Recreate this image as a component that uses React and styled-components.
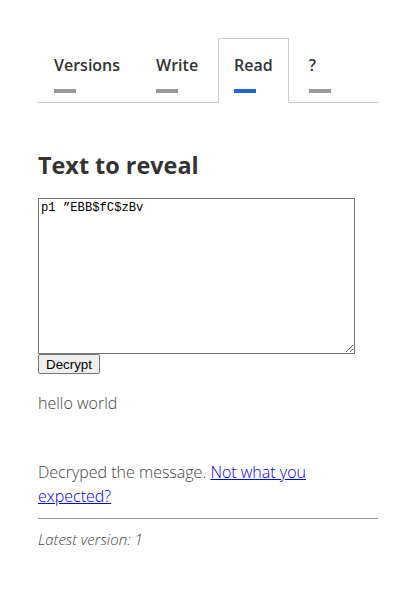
import React from 'react'
import styled, { createGlobalStyle } from 'styled-components'

const GlobalStyle = createGlobalStyle`
  body {
    margin: 0;
    background: #fff;
    font-family: "Open Sans", "Liberation Sans", sans-serif;
  }
`

const Page = styled.div`
  padding: 38px 38px 40px;
  width: 340px;
`

const TabBar = styled.nav`
  display: flex;
  align-items: flex-start;
  gap: 4px;
  border-bottom: 1px solid #ccc;
`

const Tab = styled.div`
  padding: 14px 15px 10px;
  margin-bottom: -1px;
  border: 1px solid ${p => (p.$active ? '#ccc' : 'transparent')};
  border-bottom: none;
  background: ${p => (p.$active ? '#fff' : 'transparent')};
  cursor: pointer;
`

const TabLabel = styled.div`
  font-size: 16px;
  font-weight: 600;
  line-height: 24px;
  color: #333;
`

const TabBarMark = styled.div`
  margin-top: 12px;
  width: 22px;
  height: 4px;
  background: ${p => (p.$active ? '#2266cc' : '#999')};
`

const Heading = styled.h2`
  margin: 46px 0 17px;
  font-size: 23.4px;
  font-weight: 700;
  line-height: 32px;
  color: #333;
`

const Cipher = styled.textarea`
  display: block;
  box-sizing: border-box;
  width: 317px;
  height: 156px;
  margin: 0;
  padding: 2px;
  border: 1px solid #767676;
  border-radius: 0;
  font-family: "Liberation Mono", "DejaVu Sans Mono", monospace;
  font-size: 12.2px;
  line-height: 15px;
  color: #000;
  outline: none;
`

const Button = styled.button`
  display: block;
  margin: 0;
  padding: 1px 7px;
  height: 20px;
  font-family: "Liberation Sans", Arial, sans-serif;
  font-size: 13.33px;
  color: #000;
  background: #efefef;
  border: 1px solid #767676;
  border-radius: 2px;
`

const Plain = styled.p`
  margin: ${p => p.$margin || '0'};
  font-size: 16px;
  font-weight: 300;
  line-height: 24px;
  color: #444;
`

const Link = styled.a`
  color: #0000ee;
  text-decoration: underline;
`

const Rule = styled.hr`
  margin: 10px 0 0;
  border: none;
  border-top: 1px solid #999;
`

const Footer = styled.p`
  margin: 10px 0 0;
  font-size: 15px;
  font-style: italic;
  font-weight: 300;
  line-height: 20px;
  color: #444;
`

const tabs = ['Versions', 'Write', 'Read', '?']

export default function App () {
  return (
    <Page>
      <GlobalStyle />
      <TabBar>
        {tabs.map(t => (
          <Tab key={t} $active={t === 'Read'}>
            <TabLabel>{t}</TabLabel>
            <TabBarMark $active={t === 'Read'} />
          </Tab>
        ))}
      </TabBar>
      <Heading>Text to reveal</Heading>
      <Cipher defaultValue={'p1 \u201dEBB$fC$zBv'} spellCheck={false} />
      <Button>Decrypt</Button>
      <Plain $margin="17px 0 0">hello world</Plain>
      <Plain $margin="45px 0 0">
        Decryped the message. <Link href="#">Not what you expected?</Link>
      </Plain>
      <Rule />
      <Footer>Latest version: 1</Footer>
    </Page>
  )
}
